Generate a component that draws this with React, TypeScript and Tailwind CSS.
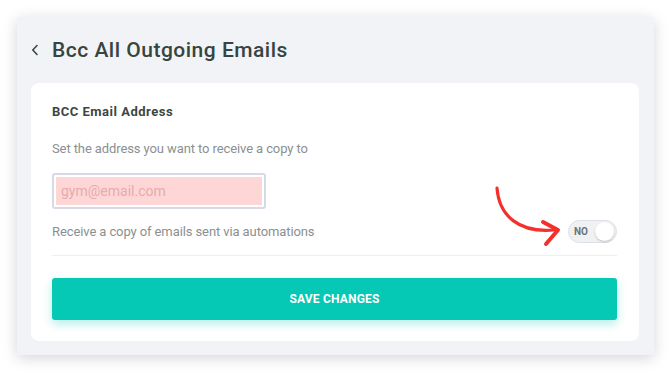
import React from "react";

export default function App() {
  return (
    <div className="w-[670px] h-[374px] bg-white p-[17px] pr-[16px] pb-[19px]" style={{ fontFamily: "Roboto, 'Liberation Sans', sans-serif" }}>
      <div className="w-[637px] h-[338px] bg-[#f2f3f7] shadow-[0_3px_14px_rgba(0,0,0,0.17)] flex flex-col pl-[14px] pr-[15px] pb-[14px]">
        <div className="h-[66px] flex items-center">
          <svg width="8" height="12" viewBox="0 0 8 12" className="mr-[14px]">
            <path d="M6 1.5 L1.8 6 L6 10.5" fill="none" stroke="#3b4746" strokeWidth="1.6" strokeLinecap="round" strokeLinejoin="round" />
          </svg>
          <h1 className="text-[21px] leading-[24px] font-medium text-[#364442] tracking-[0.5px] ml-[-1px]">Bcc All Outgoing Emails</h1>
        </div>
        <div className="relative flex-1 bg-white rounded-[8px] pt-[20px] pl-[21px] pr-[22px] flex flex-col">
          <div className="text-[13px] leading-[18px] font-bold text-[#3b4746] tracking-[0.5px]">BCC Email Address</div>
          <div className="mt-[18px] text-[13px] leading-[19px] text-[#8b8f92] tracking-[-0.1px]">Set the address you want to receive a copy to</div>
          <div className="mt-[15px] w-[214px] h-[36px] border-2 border-[#d6dae4] rounded-[3px] p-[2px]">
            <div className="h-full bg-[#ffd6d6] flex items-center pl-[5px] text-[14px] text-[#e6abad]">gym@email.com</div>
          </div>
          <div className="mt-[11px] flex items-center justify-between h-[23px]">
            <span className="text-[13px] text-[#8b8f92] tracking-[-0.1px]">Receive a copy of emails sent via automations</span>
            <div className="w-[49px] h-[23px] rounded-full bg-[#f0f1f3] border border-[#dcdfe3] flex items-center justify-between pl-[5px] pr-[2px]">
              <span className="text-[10px] font-bold text-[#6b7479]">NO</span>
              <span className="w-[19px] h-[19px] rounded-full bg-white shadow-[0_1px_2px_rgba(0,0,0,0.2)]"></span>
            </div>
          </div>
          <div className="mt-[12px] h-px bg-[#eceef0]"></div>
          <button className="mt-[22px] h-[42px] w-full rounded-[3px] bg-[#05c8b5] text-white text-[12px] font-bold tracking-[0.2px] shadow-[0_4px_10px_rgba(5,200,181,0.3)]">SAVE CHANGES</button>
          <svg className="absolute left-[463px] top-[103px]" width="72" height="64" viewBox="0 0 72 64">
            <path d="M3 2 C 5 30, 25 47, 60 44" fill="none" stroke="#f3302b" strokeWidth="3.2" strokeLinecap="round" />
            <path d="M49 36 L64 44 L52 58" fill="none" stroke="#f3302b" strokeWidth="4" strokeLinecap="round" strokeLinejoin="round" />
          </svg>
        </div>
      </div>
    </div>
  );
}
